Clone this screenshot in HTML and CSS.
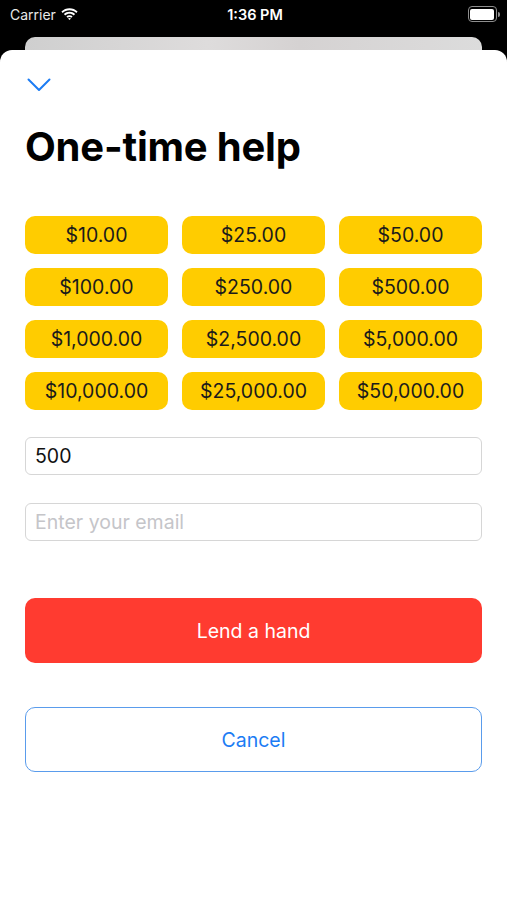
FILE: index.html
```html
<!DOCTYPE html>
<html lang="en">
<head>
  <meta charset="UTF-8" />
  <meta name="viewport" content="width=device-width, initial-scale=1.0"/>
  <title>One-time help</title>
  <link rel="stylesheet" href="styles.css">
</head>
<body>

  <div class="status">
    <div class="carrier">
      Carrier
      <svg class="wifi" width="17" height="12" viewBox="0 0 17 12">
        <path d="M8.5 2.2c2.6 0 5 1 6.8 2.7l1.3-1.4C14.4 1.4 11.6.2 8.5.2S2.6 1.4.4 3.5l1.3 1.4C3.5 3.2 5.9 2.2 8.5 2.2z" fill="#fff"/>
        <path d="M8.5 5.7c1.6 0 3.1.6 4.3 1.7l1.3-1.4C12.6 4.6 10.6 3.7 8.5 3.7S4.4 4.6 2.9 6l1.3 1.4c1.2-1.1 2.7-1.7 4.3-1.7z" fill="#fff"/>
        <path d="M8.5 9.1c.7 0 1.3.3 1.8.7l1.3-1.4c-.8-.8-1.9-1.2-3.1-1.2s-2.3.4-3.1 1.2l1.3 1.4c.5-.4 1.1-.7 1.8-.7zM7 10.6l1.5 1.4 1.5-1.4c-.4-.4-.9-.6-1.5-.6s-1.1.2-1.5.6z" fill="#fff"/>
      </svg>
    </div>
    <div class="time">1:36 PM</div>
    <div class="battery">
      <div class="battery-body"><div class="battery-fill"></div></div>
      <div class="battery-nub"></div>
    </div>
  </div>

  <div class="peek"></div>

  <div class="sheet">
    <svg class="chevron" width="24" height="14" viewBox="0 0 24 14">
      <path d="M1.5 1.5L12 12 22.5 1.5" fill="none" stroke="#1c7cf4" stroke-width="2" stroke-linecap="round" stroke-linejoin="round"/>
    </svg>

    <h1>One-time help</h1>

    <div class="amounts">
      <button class="amount">$10.00</button>
      <button class="amount">$25.00</button>
      <button class="amount">$50.00</button>
      <button class="amount">$100.00</button>
      <button class="amount">$250.00</button>
      <button class="amount">$500.00</button>
      <button class="amount">$1,000.00</button>
      <button class="amount">$2,500.00</button>
      <button class="amount">$5,000.00</button>
      <button class="amount">$10,000.00</button>
      <button class="amount">$25,000.00</button>
      <button class="amount">$50,000.00</button>
    </div>

    <input class="field" type="text" value="500" />
    <input class="field email" type="email" placeholder="Enter your email" />

    <button class="lend">Lend a hand</button>
    <button class="cancel">Cancel</button>
  </div>

</body>
</html>
```

FILE: styles.css
```css
body {
  margin: 0;
  padding: 0;
  background: #000;
  font-family: 'Inter', 'Noto Sans', sans-serif;
  height: 900px;
  overflow: hidden;
}

.status {
  height: 28px;
  display: flex;
  align-items: center;
  justify-content: space-between;
  padding: 0 7px 0 10px;
  color: #fff;
  font-size: 14px;
}

.carrier {
  display: flex;
  align-items: center;
  gap: 5px;
  width: 90px;
  color: #e8e8e8;
}

.time {
  font-weight: 600;
  font-size: 14.5px;
}

.battery {
  width: 90px;
  display: flex;
  justify-content: flex-end;
  align-items: center;
}

.battery-body {
  width: 24px;
  height: 11px;
  border: 1.5px solid #8e8e8e;
  border-radius: 4px;
  padding: 1.5px;
  box-sizing: content-box;
}

.battery-fill {
  width: 100%;
  height: 100%;
  background: #fff;
  border-radius: 2px;
}

.battery-nub {
  width: 2px;
  height: 5px;
  background: #8e8e8e;
  border-radius: 0 2px 2px 0;
  margin-left: 1px;
}

.peek {
  margin: 9px 25px 0;
  height: 13px;
  border-radius: 10px 10px 0 0;
  background: linear-gradient(90deg, #cfcfcf, #dedcdc 40%, #d5d2d2 60%, #dcdcdc);
}

.sheet {
  background: #fff;
  border-radius: 12px 12px 0 0;
  height: 850px;
  padding: 0 25px;
  display: flex;
  flex-direction: column;
}

.chevron {
  margin: 28px 0 0 2px;
  display: block;
}

h1 {
  font-size: 40px;
  font-weight: 700;
  letter-spacing: -0.2px;
  color: #000;
  margin: 32px 0 0;
  line-height: 46px;
}

.amounts {
  display: grid;
  grid-template-columns: repeat(3, 1fr);
  gap: 14px 14px;
  margin-top: 46px;
}

.amount {
  height: 38px;
  border: none;
  border-radius: 10px;
  background: #ffcc00;
  color: #1b1b1b;
  font-family: inherit;
  font-size: 19.5px;
  padding: 0;
}

.field {
  height: 38px;
  border: 1px solid #d6d6d6;
  border-radius: 6px;
  padding: 0 9px;
  font-family: inherit;
  font-size: 19.5px;
  color: #111;
  outline: none;
  margin-top: 27px;
  box-sizing: border-box;
}

.email {
  margin-top: 28px;
}

.field::placeholder {
  color: #c5c5c9;
}

.lend {
  margin-top: 57px;
  height: 65px;
  border: none;
  border-radius: 10px;
  background: #ff3b30;
  color: #fff;
  font-family: inherit;
  font-size: 19.5px;
}

.cancel {
  margin-top: 44px;
  height: 65px;
  border: 1.5px solid #5a9cec;
  border-radius: 10px;
  background: #fff;
  color: #1c7cf4;
  font-family: inherit;
  font-size: 19.5px;
}
```
